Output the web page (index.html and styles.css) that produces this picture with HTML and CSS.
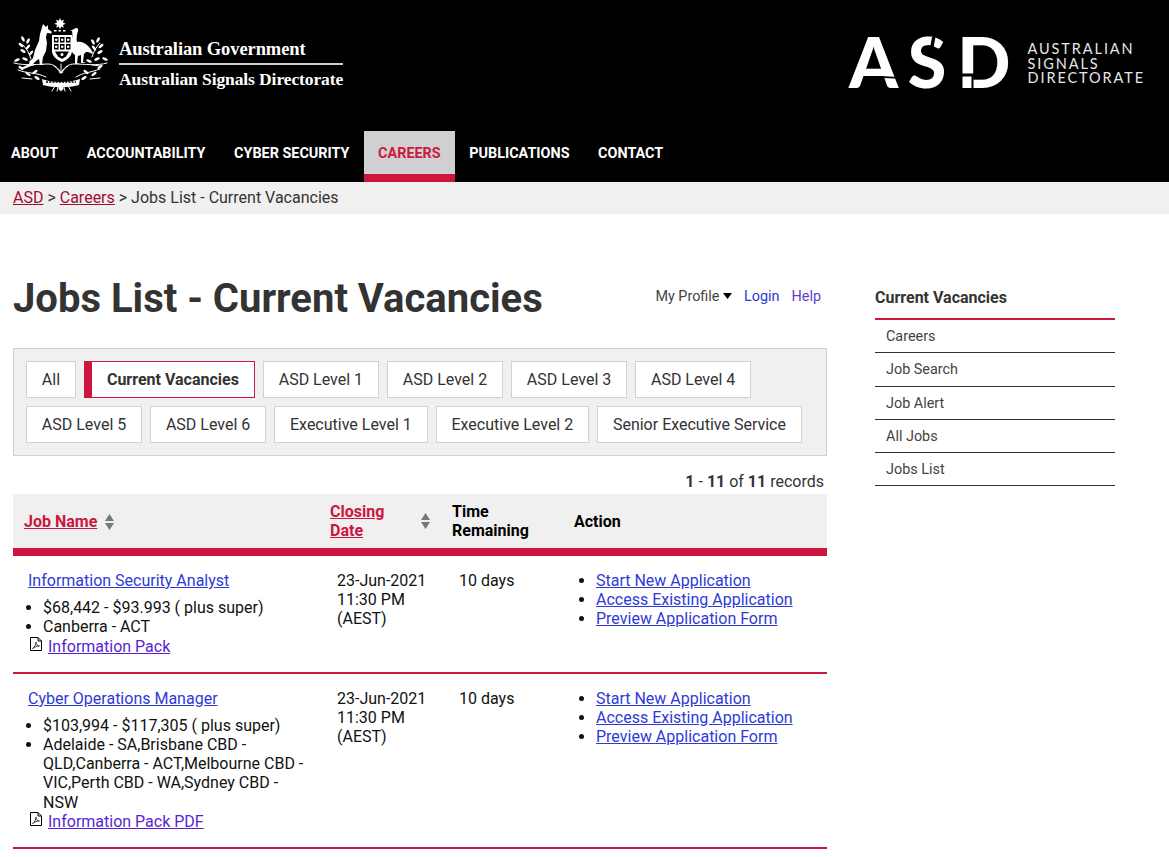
FILE: index.html
```html
<!DOCTYPE html>
<html lang="en">
<head>
<meta charset="utf-8">
<title>Jobs List - Current Vacancies</title>
<link rel="stylesheet" href="styles.css">
</head>
<body>
<header class="site-header">
  <div class="brand-row">
    <div class="gov-brand">
      <svg class="crest" viewBox="0 0 108 80" width="108" height="80" aria-hidden="true">
        <g fill="#fff">
          <path d="M52 4l1.200 2.800 2.800-1.100-1.100 2.800 2.800 1.200-2.800 1.200 1.100 2.800-2.800-1.100-1.200 2.800-1.200-2.800-2.800 1.100 1.100-2.800-2.800-1.200 2.800-1.200-1.100-2.800 2.800 1.100z"/>
          <rect x="46" y="16" width="2.500" height="1.500"/><rect x="50.500" y="16" width="2.500" height="1.500"/><rect x="55" y="16" width="2.500" height="1.500"/>
          <path d="M35 10l3 3 2-2 0 4 4 3-1 1.500-4-.5-1 4 1 6-1 8-3 6-1 7 3 1-5 0-1-6-3 2-5 5-7 3-4-1 8-3 5-7 2-8 4-9 1-7z"/>
          <path d="M66 15c2-2 5-1 4 2-1 3-2 7-1 11 4-1 8 1 11 4 3 3 5 6 5 8l-5-2-2 0-2 2-1 8 3 1-5 0 0-8-3 1-1 7 3 1-5 0 0-9c-3-2-5-6-4-12 1-4 2-8 1-12l-2 0z"/>
          <path d="M44 21h20v16c0 5-5 9-10 11-5-2-10-6-10-11z"/>
        </g>
        <g fill="#000">
          <rect x="46" y="23" width="4.500" height="5.500"/><rect x="52" y="23" width="4.500" height="5.500"/><rect x="58" y="23" width="4.500" height="5.500"/>
          <rect x="46" y="30" width="4.500" height="5.500"/><rect x="52" y="30" width="4.500" height="5.500"/><rect x="58" y="30" width="4.500" height="5.500"/>
          <path d="M47 37.500h14l-3 5-4 2.500-4-2.500z"/>
        </g>
        <g fill="#fff">
          <circle cx="48.200" cy="25.700" r="1.300"/><circle cx="54.200" cy="25.700" r="1.300"/><circle cx="60.200" cy="25.700" r="1.300"/>
          <circle cx="48.200" cy="32.700" r="1.300"/><circle cx="54.200" cy="32.700" r="1.300"/><circle cx="60.200" cy="32.700" r="1.300"/>
          <circle cx="54" cy="40.500" r="1.500"/>
        </g>
        <g fill="none" stroke="#fff" stroke-width="1" stroke-linecap="round">
          <path d="M6 49c10 3 26 1 34 1 5 0 10 3 13 9 3-6 8-9 13-9 10 0 24 2 33-1"/>
          <path d="M53 59v-9M46 52c3 2 5 4 6 7M60 52c-3 2-5 4-6 7"/>
          <path d="M10 56c10 4 18 2 28 7M92 55c-10 4-16 3-24 8"/>
          <path d="M15 31c4 4 6 8 8 14M92 29c-4 4-6 8-8 14"/>
          <path d="M47 72l-3 5M53 70v7M60 72l3 5M50 73l-1 4M56 73l1 4"/>
          <path d="M18 52l8-1M84 51l8 1M14 64l10 1M82 65l10-1"/>
        </g>
        <path d="M34 65c9 4 28 4 38 0l-1 6c-10 3-26 3-36 0z" fill="#fff"/>
        <path d="M38 68h30" stroke="#000" stroke-width="1.400" stroke-dasharray="2 1.200"/>
        <g fill="#fff">
          <ellipse cx="15" cy="25" rx="3" ry="1.300" transform="rotate(60 15 25)"/><ellipse cx="20" cy="27" rx="3" ry="1.300" transform="rotate(-60 20 27)"/>
          <ellipse cx="13" cy="31" rx="3" ry="1.300" transform="rotate(40 13 31)"/><ellipse cx="20" cy="33" rx="3" ry="1.300" transform="rotate(-50 20 33)"/>
          <ellipse cx="15" cy="37" rx="3" ry="1.300" transform="rotate(30 15 37)"/><ellipse cx="23" cy="39" rx="3" ry="1.300" transform="rotate(-50 23 39)"/>
          <ellipse cx="90" cy="26" rx="3" ry="1.300" transform="rotate(-60 90 26)"/><ellipse cx="85" cy="28" rx="3" ry="1.300" transform="rotate(60 85 28)"/>
          <ellipse cx="93" cy="32" rx="3" ry="1.300" transform="rotate(-40 93 32)"/><ellipse cx="86" cy="34" rx="3" ry="1.300" transform="rotate(50 86 34)"/>
          <ellipse cx="92" cy="38" rx="3" ry="1.300" transform="rotate(-30 92 38)"/>
          <ellipse cx="9" cy="46" rx="3" ry="1.300" transform="rotate(-25 9 46)"/><ellipse cx="17" cy="45" rx="3" ry="1.300" transform="rotate(25 17 45)"/><ellipse cx="24" cy="47" rx="3" ry="1.300" transform="rotate(-25 24 47)"/>
          <ellipse cx="97" cy="45" rx="3" ry="1.300" transform="rotate(25 97 45)"/><ellipse cx="89" cy="45" rx="3" ry="1.300" transform="rotate(-25 89 45)"/><ellipse cx="81" cy="47" rx="3" ry="1.300" transform="rotate(25 81 47)"/>
          <ellipse cx="13" cy="54" rx="3" ry="1.300" transform="rotate(35 13 54)"/><ellipse cx="20" cy="60" rx="3" ry="1.300" transform="rotate(35 20 60)"/><ellipse cx="27" cy="58" rx="3" ry="1.300" transform="rotate(-35 27 58)"/>
          <ellipse cx="92" cy="53" rx="3" ry="1.300" transform="rotate(-35 92 53)"/><ellipse cx="86" cy="60" rx="3" ry="1.300" transform="rotate(-35 86 60)"/><ellipse cx="78" cy="58" rx="3" ry="1.300" transform="rotate(35 78 58)"/>
          <ellipse cx="29" cy="64" rx="3" ry="1.300" transform="rotate(30 29 64)"/><ellipse cx="76" cy="64" rx="3" ry="1.300" transform="rotate(-30 76 64)"/>
          <circle cx="53" cy="74" r="2.500"/>
        </g>
      </svg>
      <div class="gov-text">
        <div class="gov-line">Australian Government</div>
        <div class="gov-line gov-line-rule">Australian Signals Directorate</div>
      </div>
    </div>
    <div class="asd-brand">
      <svg class="asd-mark" viewBox="0 0 156 52" width="156" height="52" role="img" aria-label="ASD">
        <text class="asd-letter" x="24.500" y="50.500" text-anchor="middle">A</text>
        <text class="asd-letter" x="78" y="50.500" text-anchor="middle">S</text>
        <text class="asd-letter" x="135" y="50.500" text-anchor="middle">D</text>
        <path d="M30 39l20 1v1.800l-20-1z" fill="#000"/>
        <path d="M83 0h3.500l-3 16h-3.500z" fill="#000"/>
        <path d="M108 36.500h17v3h-17zM122.500 36.500h2v16h-2z" fill="#000"/>
      </svg>
      <div class="asd-name">AUSTRALIAN<br>SIGNALS<br>DIRECTORATE</div>
    </div>
  </div>
  <nav class="main-nav">
    <a class="nav-item" href="#">ABOUT</a>
    <a class="nav-item" href="#">ACCOUNTABILITY</a>
    <a class="nav-item" href="#">CYBER SECURITY</a>
    <a class="nav-item nav-active" href="#">CAREERS</a>
    <a class="nav-item" href="#">PUBLICATIONS</a>
    <a class="nav-item" href="#">CONTACT</a>
  </nav>
</header>
<div class="breadcrumb"><a href="#">ASD</a> &gt; <a href="#">Careers</a> &gt; Jobs List - Current Vacancies</div>
<div class="page">
  <main class="content">
    <div class="title-row">
      <h1>Jobs List - Current Vacancies</h1>
      <div class="user-links">
        <span class="profile">My Profile <svg class="caret" viewBox="0 0 9 6" width="9" height="6" aria-hidden="true"><path d="M0 0h9L4.500 6z"/></svg></span>
        <a href="#">Login</a>
        <a class="help" href="#">Help</a>
      </div>
    </div>
    <div class="filters">
      <a class="filter" href="#">All</a>
      <a class="filter filter-active" href="#">Current Vacancies</a>
      <a class="filter" href="#">ASD Level 1</a>
      <a class="filter" href="#">ASD Level 2</a>
      <a class="filter" href="#">ASD Level 3</a>
      <a class="filter" href="#">ASD Level 4</a>
      <a class="filter" href="#">ASD Level 5</a>
      <a class="filter" href="#">ASD Level 6</a>
      <a class="filter" href="#">Executive Level 1</a>
      <a class="filter" href="#">Executive Level 2</a>
      <a class="filter" href="#">Senior Executive Service</a>
    </div>
    <div class="records"><b>1</b> - <b>11</b> of <b>11</b> records</div>
    <table class="jobs">
      <thead>
        <tr>
          <th class="col-name"><span class="sort-head"><a href="#">Job Name</a><svg class="sort" viewBox="0 0 9 16" width="9" height="16" aria-hidden="true"><path d="M4.500 0L9 7H0zM4.500 16L0 9h9z"/></svg></span></th>
          <th class="col-date"><span class="sort-head sort-split"><a href="#">Closing Date</a><svg class="sort" viewBox="0 0 9 16" width="9" height="16" aria-hidden="true"><path d="M4.500 0L9 7H0zM4.500 16L0 9h9z"/></svg></span></th>
          <th class="col-time">Time Remaining</th>
          <th class="col-action">Action</th>
        </tr>
      </thead>
      <tbody>
        <tr>
          <td class="cell-job">
            <a class="job-link" href="#">Information Security Analyst</a>
            <ul class="job-meta"><li>$68,442 - $93.993 ( plus super)</li><li>Canberra - ACT</li></ul>
            <div class="pack"><svg class="pdf" viewBox="0 0 12 14" width="12" height="14" aria-hidden="true"><path d="M.5.500h7.500L11.500 4v9.500H.5zM8 .5V4h3.500" fill="none" stroke="#000"/><path d="M2.500 11.500c2-1 3.500-4 3.500-6.500 0 2.500 1.500 4 3.500 4-2.500 0-5 1-7 2.500z" fill="none" stroke="#000" stroke-width=".7"/></svg><a href="#">Information Pack</a></div>
          </td>
          <td>23-Jun-2021<br>11:30 PM<br>(AEST)</td>
          <td>10 days</td>
          <td><ul class="actions"><li><a href="#">Start New Application</a></li><li><a href="#">Access Existing Application</a></li><li><a href="#">Preview Application Form</a></li></ul></td>
        </tr>
        <tr>
          <td class="cell-job">
            <a class="job-link" href="#">Cyber Operations Manager</a>
            <ul class="job-meta"><li>$103,994 - $117,305 ( plus super)</li><li>Adelaide - SA,Brisbane CBD - QLD,Canberra - ACT,Melbourne CBD - VIC,Perth CBD - WA,Sydney CBD - NSW</li></ul>
            <div class="pack"><svg class="pdf" viewBox="0 0 12 14" width="12" height="14" aria-hidden="true"><path d="M.5.500h7.500L11.500 4v9.500H.5zM8 .5V4h3.500" fill="none" stroke="#000"/><path d="M2.500 11.500c2-1 3.500-4 3.500-6.500 0 2.500 1.500 4 3.500 4-2.500 0-5 1-7 2.500z" fill="none" stroke="#000" stroke-width=".7"/></svg><a href="#">Information Pack PDF</a></div>
          </td>
          <td>23-Jun-2021<br>11:30 PM<br>(AEST)</td>
          <td>10 days</td>
          <td><ul class="actions"><li><a href="#">Start New Application</a></li><li><a href="#">Access Existing Application</a></li><li><a href="#">Preview Application Form</a></li></ul></td>
        </tr>
      </tbody>
    </table>
  </main>
  <aside class="sidebar">
    <h2>Current Vacancies</h2>
    <ul class="side-menu">
      <li><a href="#">Careers</a></li>
      <li><a href="#">Job Search</a></li>
      <li><a href="#">Job Alert</a></li>
      <li><a href="#">All Jobs</a></li>
      <li><a href="#">Jobs List</a></li>
    </ul>
  </aside>
</div>
</body>
</html>
```
FILE: styles.css
```css
* { box-sizing: border-box; }
html, body { margin: 0; padding: 0; }
body {
  font-family: Roboto, "Liberation Sans", sans-serif;
  font-size: 16px;
  line-height: 19.2px;
  color: #333;
  background: #fff;
  height: 857px;
  overflow: hidden;
}
.site-header { background: #000; height: 182px; }
.brand-row {
  height: 131px;
  display: flex;
  justify-content: space-between;
  align-items: flex-start;
}
.gov-brand { display: flex; align-items: flex-start; padding: 14px 0 0 8px; }
.crest { display: block; }
.gov-text {
  font-family: "Liberation Serif", serif;
  font-weight: 700;
  font-size: 18.500px;
  line-height: 22px;
  color: #fff;
  margin: 24px 0 0 3px;
  width: 224px;
}
.gov-line { height: 25px; white-space: nowrap; letter-spacing: -.1px; }
.gov-line-rule { border-top: 2px solid #ccc; padding-top: 3px; height: 28px; font-size: 17.500px; }
.asd-brand { display: flex; align-items: flex-start; padding: 37px 24px 0 0; }
.asd-mark { display: block; overflow: visible; }
.asd-letter { font-family: Lato, sans-serif; font-weight: 900; font-size: 70px; fill: #fff; }
.asd-name {
  font-family: Lato, sans-serif;
  font-size: 14.500px;
  line-height: 14.700px;
  letter-spacing: 1.900px;
  color: #e6e6e6;
  margin: 5px 0 0 23px;
  white-space: nowrap;
}
.main-nav { display: flex; height: 51px; }
.nav-item {
  display: block;
  padding: 15px 14.300px 0;
  font-size: 14.400px;
  line-height: 16px;
  font-weight: 700;
  color: #fff;
  text-decoration: none;
}
.nav-item:first-child { padding-left: 11px; }
.nav-active {
  background: #d0d0d2;
  color: #cc1a3f;
  border-bottom: 8px solid #cc1640;
}
.breadcrumb {
  background: #f0f0f0;
  height: 32px;
  padding: 6px 13px;
}
.breadcrumb a { color: #a00c2f; }
.page { display: flex; padding: 0 0 0 13px; }
.content { width: 814px; flex: none; }
.title-row {
  display: flex;
  justify-content: space-between;
  align-items: flex-start;
  height: 134px;
  padding-top: 61px;
}
h1 {
  margin: 0;
  font-size: 40px;
  line-height: 48px;
  font-weight: 700;
  color: #333;
}
.user-links {
  display: flex;
  gap: 12px;
  font-size: 14.400px;
  line-height: 17px;
  padding: 13px 6px 0 0;
}
.user-links a { color: #2d3ad0; text-decoration: none; }
.user-links a.help { color: #5a3fd0; }
.profile { color: #444; }
.caret { fill: #000; vertical-align: 2px; }
.filters {
  background: #f0f0f0;
  border: 1px solid #d2d2d2;
  height: 108px;
  padding: 12px;
  display: flex;
  flex-wrap: wrap;
  gap: 8px;
  align-content: flex-start;
}
.filter {
  display: block;
  height: 37px;
  padding: 8px 14.850px;
  background: #fff;
  border: 1px solid #d2d2d2;
  color: #333;
  text-decoration: none;
  white-space: nowrap;
}
.filter-active {
  font-weight: 700;
  border: 1px solid #cc1640;
  border-left: 8px solid #cc1640;
  padding-left: 15px;
  padding-right: 15px;
}
.records { text-align: right; height: 38px; padding: 16px 3px 0 0; line-height: 19px; }
.jobs {
  border-collapse: separate;
  border-spacing: 0;
  table-layout: fixed;
  width: 814px;
}
.jobs th {
  background: #f0f0f0;
  color: #000;
  text-align: left;
  font-weight: 700;
  height: 62px;
  padding: 7px 11px;
  border-bottom: 8px solid #cc1640;
  vertical-align: middle;
}
.jobs .col-name, .jobs .col-action { padding-top: 9px; }
.col-name { width: 306px; }
.col-date { width: 122px; }
.col-time { width: 122px; }
.sort-head { display: flex; align-items: center; gap: 8px; }
.sort-split { justify-content: space-between; gap: 20px; }
.jobs .sort-head a { color: #cc1640; }
.sort { fill: #777; flex: none; }
.jobs td {
  vertical-align: top;
  color: #111;
  padding: 15px 0 15px 18px;
  border-bottom: 2px solid #cc1640;
}
.jobs .cell-job { padding-left: 15px; padding-right: 10px; }
.jobs a { color: #2f3ad6; }
.job-link { display: block; margin-bottom: 8px; }
.job-meta { margin: 0; padding-left: 15px; }
.pack { display: flex; align-items: flex-start; gap: 6px; padding: 0 0 0 2px; height: 20px; }
.jobs .pack a { color: #5a1fd1; }
.pdf { flex: none; }
.actions { margin: 0; padding: 0 0 0 15px; }
.sidebar { width: 240px; margin-left: 48px; flex: none; }
.sidebar h2 {
  margin: 0;
  padding: 74px 0 13px;
  font-size: 16px;
  line-height: 19px;
  font-weight: 700;
  color: #333;
  border-bottom: 2px solid #cc1640;
  height: 106px;
}
.side-menu { list-style: none; margin: 0; padding: 0; font-size: 14.400px; }
.side-menu li { height: 33.300px; border-bottom: 1px solid #333; padding: 7px 0 0 11px; }
.side-menu a { color: #444; text-decoration: none; }
```
